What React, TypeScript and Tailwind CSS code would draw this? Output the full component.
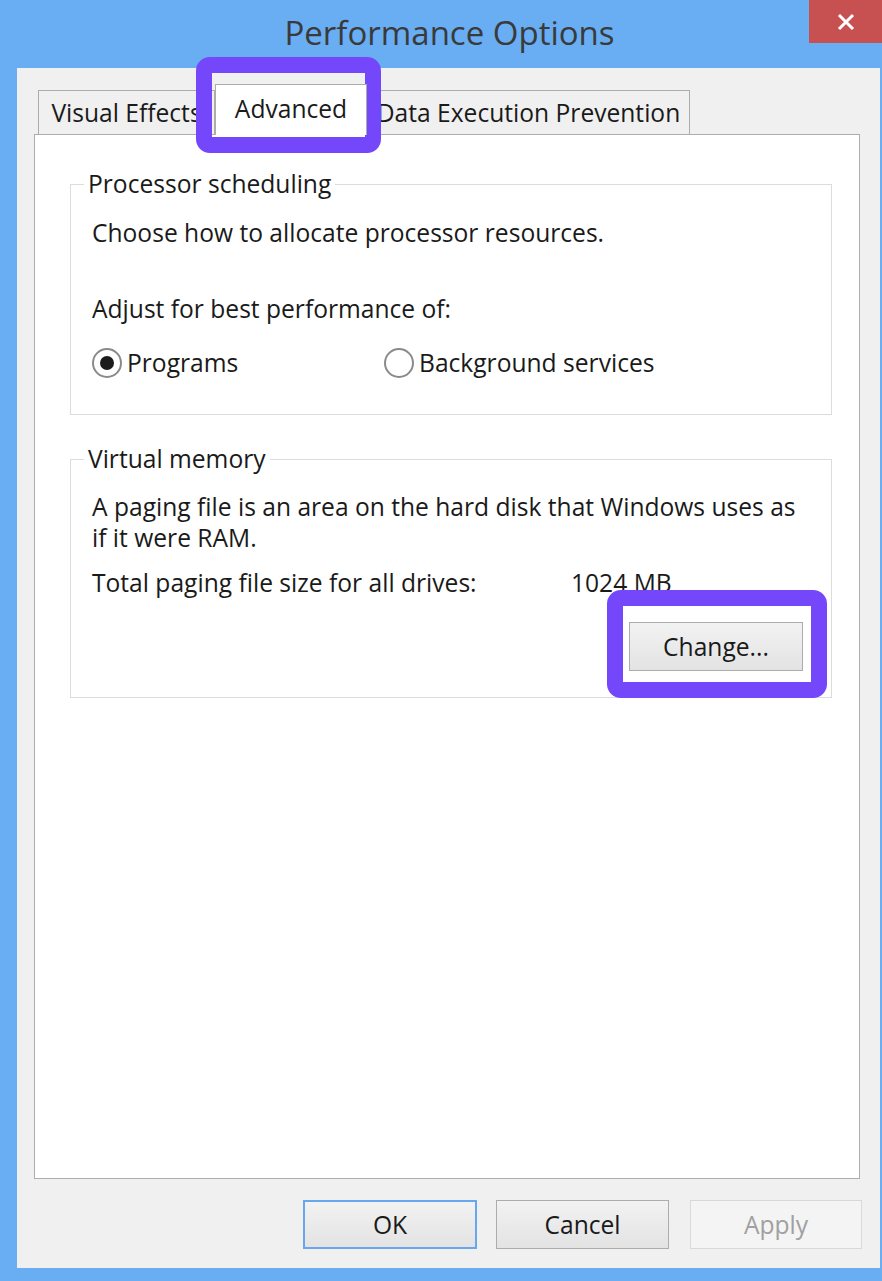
import type { ReactNode } from 'react'

function TitleBar() {
    return (
        <div className="relative flex h-[68px] shrink-0 items-center justify-center pl-[17px] text-[33px] text-[#3a3a3a]">
            <span className="-mt-[2px]">Performance Options</span>
            <div className="absolute right-0 top-0 flex h-[43px] w-[73px] items-center justify-center bg-[#c75050]">
                <svg width="18" height="18" viewBox="0 0 18 18">
                    <path d="M2 2 L16 16 M16 2 L2 16" stroke="#ffffff" strokeWidth="3" />
                </svg>
            </div>
        </div>
    )
}

function Tab({ label, width, selected }: { label: string; width: string; selected?: boolean }) {
    if (selected) {
        return (
            <div
                className={`relative z-10 -mb-px flex h-[51px] items-center justify-center border border-b-0 border-[#acacac] bg-white pb-[2px] ${width}`}
            >
                {label}
            </div>
        )
    }
    return (
        <div
            className={`flex h-[44px] items-center justify-center overflow-hidden whitespace-nowrap border border-b-0 border-[#acacac] bg-[#f0f0f0] ${width}`}
        >
            {label}
        </div>
    )
}

function Radio({ checked, label }: { checked?: boolean; label: string }) {
    return (
        <div className="flex items-center gap-[5px]">
            <span className="flex h-[30px] w-[30px] items-center justify-center rounded-full border-2 border-[#8a8a8a] bg-white">
                {checked && <span className="h-[14px] w-[14px] rounded-full bg-[#1c1c1c]" />}
            </span>
            <span>{label}</span>
        </div>
    )
}

function Group({ title, className, children }: { title: string; className: string; children: ReactNode }) {
    return (
        <fieldset className={`ml-[35px] w-[762px] border border-[#dcdcdc] pl-[13px] pr-[28px] ${className}`}>
            <legend className="px-[4px] leading-[32px]">{title}</legend>
            <div className="pl-[8px]">{children}</div>
        </fieldset>
    )
}

function Button({ label, className }: { label: string; className: string }) {
    return (
        <div className={`flex h-[49px] items-center justify-center bg-linear-to-b ${className}`}>
            {label}
        </div>
    )
}

export default function App() {
    return (
        <div className="relative flex h-[1281px] w-[882px] flex-col bg-[#69adf3] font-['Open_Sans',sans-serif] text-[24.6px] leading-[32px] text-[#1a1a1a]">
            <TitleBar />
            <div className="flex pl-[17px]">
                <div className="flex h-[1200px] w-[863px] flex-col bg-[#f0f0f0] pl-[17px] pt-[14px]">
                    <div className="flex h-[52px] items-end pl-[4px]">
                        <Tab label="Visual Effects" width="w-[177px]" />
                        <Tab label="Advanced" width="w-[152px]" selected />
                        <Tab label="Data Execution Prevention" width="w-[323px]" />
                    </div>
                    <div className="h-[1045px] w-[826px] border border-[#adadad] bg-white">
                        <Group title="Processor scheduling" className="mt-[33px] pb-[35px]">
                            <div className="mt-[17px]">Choose how to allocate processor resources.</div>
                            <div className="mt-[44px]">Adjust for best performance of:</div>
                            <div className="mt-[22px] flex">
                                <div className="w-[292px]">
                                    <Radio checked label="Programs" />
                                </div>
                                <Radio label="Background services" />
                            </div>
                        </Group>
                        <Group title="Virtual memory" className="mt-[28px] pb-[26px]">
                            <div className="mt-[16px] whitespace-nowrap leading-[31px]">
                                A paging file is an area on the hard disk that Windows uses as
                                <br />
                                if it were RAM.
                            </div>
                            <div className="mt-[14px] flex">
                                <span className="w-[479px]">Total paging file size for all drives:</span>
                                <span>1024 MB</span>
                            </div>
                            <div className="mt-[23px] flex justify-end">
                                <Button
                                    label="Change..."
                                    className="w-[174px] border border-[#acacac] from-[#f2f2f2] to-[#e3e3e3]"
                                />
                            </div>
                        </Group>
                    </div>
                    <div className="mt-[21px] flex pr-[18px] justify-end">
                        <Button
                            label="OK"
                            className="w-[174px] border-2 border-[#66a7ee] from-[#f2f2f2] to-[#e3e3e3]"
                        />
                        <Button
                            label="Cancel"
                            className="ml-[19px] w-[173px] border border-[#acacac] from-[#f2f2f2] to-[#e3e3e3]"
                        />
                        <Button
                            label="Apply"
                            className="ml-[21px] w-[172px] border border-[#d9d9d9] from-[#f4f4f4] to-[#f4f4f4] text-[#a0a0a0]"
                        />
                    </div>
                </div>
            </div>
            {/* annotation frames */}
            <div className="pointer-events-none absolute left-[196px] top-[57px] h-[96px] w-[185px] rounded-[14px] border-[16px] border-[#7447fb]" />
            <div className="pointer-events-none absolute left-[607px] top-[590px] h-[108px] w-[220px] rounded-[14px] border-[16px] border-[#7447fb]" />
        </div>
    )
}
